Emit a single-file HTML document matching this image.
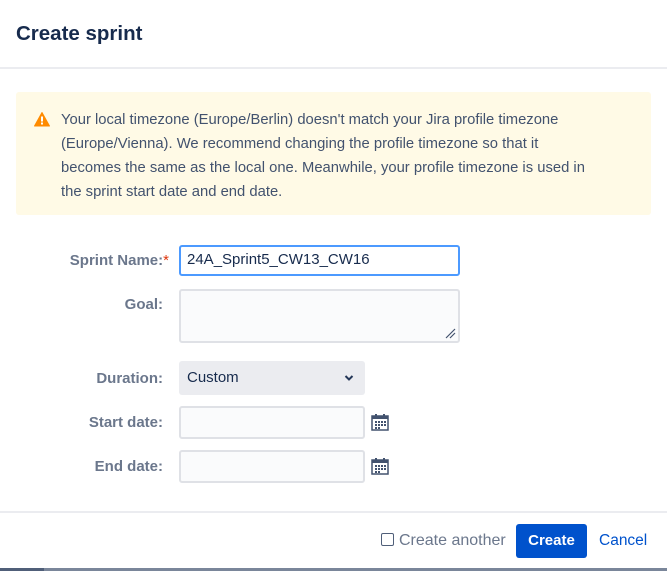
<!DOCTYPE html>
<html><head><style>
*{box-sizing:border-box;margin:0;padding:0}
body{width:667px;height:571px;overflow:hidden;background:#fff;font-family:"Liberation Sans",sans-serif;color:#172b4d;position:relative}
.abs{position:absolute}
h1{position:absolute;left:16px;top:22px;font-size:20.5px;font-weight:bold;color:#172b4d;white-space:nowrap}
.hdr{left:0;top:67px;width:667px;height:2px;background:#ebecf0}
.warn{left:16px;top:92px;width:635px;height:123px;background:#fffae6;border-radius:3px}
.wt{left:61px;top:108px;width:600px;font-size:14.8px;line-height:24px;color:#42526e;white-space:nowrap}
.lbl{right:504px;font-size:15px;color:#6b778c;font-weight:bold;text-align:right}
.in{left:179px;border:2px solid #dfe1e6;background:#fafbfc;border-radius:3px}
.cal{left:371px}
.ftr{left:0;top:511px;width:667px;height:2px;background:#ebecf0}
</style></head><body>
<h1>Create sprint</h1>
<div class="abs hdr"></div>
<div class="abs warn"></div>
<svg class="abs" style="left:34px;top:112px" width="16" height="15" viewBox="0 0 16 15"><path d="M8 0.5 L15.5 14 L0.5 14 Z" fill="#ff8b00" stroke="#ff8b00" stroke-linejoin="round"/><rect x="7" y="4.5" width="2" height="5" fill="#fff"/><rect x="7" y="10.5" width="2" height="2" fill="#fff"/></svg>
<div class="abs wt">Your local timezone (Europe/Berlin) doesn't match your Jira profile timezone<br>(Europe/Vienna). We recommend changing the profile timezone so that it<br>becomes the same as the local one. Meanwhile, your profile timezone is used in<br>the sprint start date and end date.</div>

<div class="abs lbl" style="top:252px;right:498px">Sprint Name:<span style="color:#de350b;font-weight:normal">*</span></div>
<div class="abs in" style="top:245px;width:281px;height:31px;border-color:#4c9aff;background:#fff"></div>
<div class="abs" style="left:187px;top:251px;font-size:15px;color:#172b4d">24A_Sprint5_CW13_CW16</div>

<div class="abs lbl" style="top:296px">Goal:</div>
<div class="abs in" style="top:289px;width:281px;height:54px"></div>
<svg class="abs" style="left:444px;top:327px" width="12" height="12"><path d="M2 11 L11 2 M6 11 L11 6" stroke="#42526e" stroke-width="1.2"/></svg>

<div class="abs lbl" style="top:370px">Duration:</div>
<div class="abs" style="left:179px;top:361px;width:186px;height:34px;background:#ebecf0;border-radius:3px"></div>
<div class="abs" style="left:187px;top:369px;font-size:15px;color:#172b4d">Custom</div>
<svg class="abs" style="left:344px;top:374px" width="10" height="8"><path d="M1.5 2 L5 5.5 L8.5 2" stroke="#253858" stroke-width="2" fill="none"/></svg>

<div class="abs lbl" style="top:414px">Start date:</div>
<div class="abs in" style="top:406px;width:186px;height:33px"></div>
<div class="abs lbl" style="top:458px">End date:</div>
<div class="abs in" style="top:450px;width:186px;height:33px"></div>

<svg class="abs cal" style="top:413px" width="18" height="18" viewBox="0 0 18 18"><rect x="1" y="3" width="16" height="14" fill="none" stroke="#42526e" stroke-width="1.5"/><rect x="1" y="3" width="16" height="3" fill="#42526e"/><rect x="4" y="1" width="2" height="3" fill="#42526e"/><rect x="12" y="1" width="2" height="3" fill="#42526e"/><g fill="#42526e"><rect x="4" y="8" width="2" height="2"/><rect x="7" y="8" width="2" height="2"/><rect x="10" y="8" width="2" height="2"/><rect x="13" y="8" width="2" height="2"/><rect x="4" y="11" width="2" height="2"/><rect x="7" y="11" width="2" height="2"/><rect x="10" y="11" width="2" height="2"/><rect x="13" y="11" width="2" height="2"/><rect x="4" y="14" width="2" height="2"/><rect x="7" y="14" width="2" height="2"/></g></svg>
<svg class="abs cal" style="top:457px" width="18" height="18" viewBox="0 0 18 18"><rect x="1" y="3" width="16" height="14" fill="none" stroke="#42526e" stroke-width="1.5"/><rect x="1" y="3" width="16" height="3" fill="#42526e"/><rect x="4" y="1" width="2" height="3" fill="#42526e"/><rect x="12" y="1" width="2" height="3" fill="#42526e"/><g fill="#42526e"><rect x="4" y="8" width="2" height="2"/><rect x="7" y="8" width="2" height="2"/><rect x="10" y="8" width="2" height="2"/><rect x="13" y="8" width="2" height="2"/><rect x="4" y="11" width="2" height="2"/><rect x="7" y="11" width="2" height="2"/><rect x="10" y="11" width="2" height="2"/><rect x="13" y="11" width="2" height="2"/><rect x="4" y="14" width="2" height="2"/><rect x="7" y="14" width="2" height="2"/></g></svg>

<div class="abs ftr"></div>
<div class="abs" style="left:381px;top:533px;width:13px;height:13px;border:1px solid #505f79;border-radius:2px"></div>
<div class="abs" style="left:399px;top:532px;font-size:16px;color:#6b778c">Create another</div>
<div class="abs" style="left:516px;top:524px;width:71px;height:34px;background:#0052cc;border-radius:3px;color:#fff;font-weight:bold;font-size:15px;text-align:center;line-height:34px">Create</div>
<div class="abs" style="left:599px;top:532px;font-size:15.5px;color:#0052cc">Cancel</div>
<div class="abs" style="left:0;top:568px;width:667px;height:3px;background:#7a869a"></div>
<div class="abs" style="left:0;top:568px;width:44px;height:3px;background:#505f79"></div>
</body></html>
